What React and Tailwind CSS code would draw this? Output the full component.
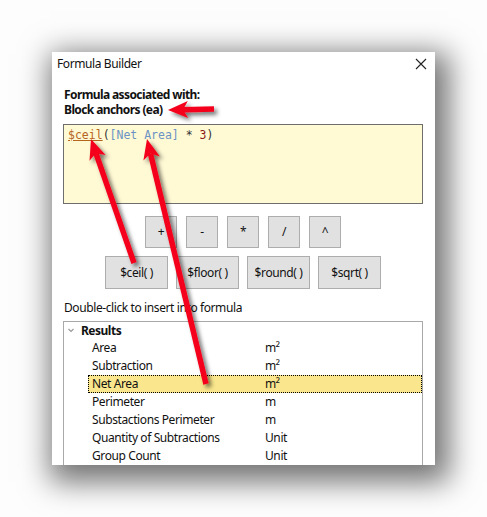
import React from "react";

function arrowParts(tx, ty, sx, sy, headLen = 20, headHalf = 8.5, notch = 15) {
  const dx = tx - sx, dy = ty - sy;
  const len = Math.hypot(dx, dy);
  const ux = dx / len, uy = dy / len;
  const nx = -uy, ny = ux;
  const bx = tx - ux * headLen, by = ty - uy * headLen;
  const mx = tx - ux * notch, my = ty - uy * notch;
  const pts = [
    [tx, ty],
    [bx + nx * headHalf, by + ny * headHalf],
    [mx, my],
    [bx - nx * headHalf, by - ny * headHalf],
  ].map((p) => p.map((v) => v.toFixed(1)).join(",")).join(" ");
  return { pts, line: { x1: sx, y1: sy, x2: mx, y2: my } };
}

function Arrow({ tip, tail }) {
  const a = arrowParts(tip[0], tip[1], tail[0], tail[1]);
  return (
    <g>
      <line {...a.line} stroke="#f4001a" strokeWidth="5.5" strokeLinecap="butt" />
      <polygon points={a.pts} fill="#f4001a" />
    </g>
  );
}

const items = [
  ["Area", "m²"],
  ["Subtraction", "m²"],
  ["Net Area", "m²", true],
  ["Perimeter", "m"],
  ["Substactions Perimeter", "m"],
  ["Quantity of Subtractions", "Unit"],
  ["Group Count", "Unit"],
];

export default function App() {
  return (
    <div
      className="relative w-[487px] h-[517px] bg-[#fdfdfd] overflow-hidden pl-[52px] pt-[52px] text-[12px] tracking-[-0.4px] text-[#111]"
      style={{ fontFamily: '"Noto Sans", "Open Sans", sans-serif' }}
    >
      <div className="w-[383px] h-[413px] bg-white overflow-hidden shadow-[6px_9px_28px_8px_rgba(0,0,0,0.55)]">
        {/* title bar */}
        <div className="h-[23px] flex items-center justify-between pl-[5px] pr-[8px]">
          <span className="text-[12px] text-[#111]">Formula Builder</span>
          <svg width="12" height="12" viewBox="0 0 12 12">
            <path d="M1 1 L11 11 M11 1 L1 11" stroke="#222" strokeWidth="1.1" />
          </svg>
        </div>

        <div className="mt-[12px] pl-[12px] font-bold tracking-[-0.6px] leading-[15px]">
          <div>Formula associated with:</div>
          <div>Block anchors (ea)</div>
        </div>

        <div className="ml-[11px] mt-[7px] w-[360px] h-[80px] border border-[#6e6e6e] bg-[#fff9d4] px-[4px] pt-[2px]">
          <div
            className="text-[11.5px] leading-[16px] tracking-normal whitespace-pre"
            style={{ fontFamily: '"DejaVu Sans Mono", "Liberation Mono", monospace' }}
          >
            <span className="text-[#b5651d] underline">$ceil</span>
            <span className="text-[#333]">(</span>
            <span className="text-[#6b93c4]">[Net Area]</span>
            <span className="text-[#333]"> * </span>
            <span className="text-[#8b1a1a]">3</span>
            <span className="text-[#333]">)</span>
          </div>
        </div>

        <div className="ml-[11px] w-[360px] mt-[12px] flex justify-center gap-[9px]">
          {["+", "-", "*", "/", "^"].map((s) => (
            <div
              key={s}
              className="w-[32px] h-[32px] bg-[#e1e1e1] border border-[#adadad] flex items-center justify-center"
            >
              {s}
            </div>
          ))}
        </div>

        <div className="ml-[11px] w-[360px] mt-[8px] flex justify-center gap-[8px]">
          {["$ceil( )", "$floor( )", "$round( )", "$sqrt( )"].map((s) => (
            <div
              key={s}
              className="w-[63px] h-[33px] bg-[#e1e1e1] border border-[#adadad] flex items-center justify-center"
            >
              {s}
            </div>
          ))}
        </div>

        <div className="mt-[11px] pl-[12px] leading-[15px]">Double-click to insert into formula</div>

        <div className="ml-[11px] mt-[6px] w-[360px] h-[200px] border border-[#a9a9a9]">
          <div className="h-[17px] flex items-center">
            <svg width="16" height="10" viewBox="0 0 16 10" className="ml-[1px]">
              <path d="M3.5 3 L6 5.5 L8.5 3" stroke="#999" strokeWidth="1.2" fill="none" />
            </svg>
            <span className="font-bold tracking-[-0.5px]">Results</span>
          </div>
          {items.map(([name, unit, sel]) => (
            <div
              key={name}
              className={
                "ml-[24px] h-[18px] flex items-center " +
                (sel ? "bg-[#fae68c] border border-dotted border-[#000]" : "border border-transparent")
              }
            >
              <span className="w-[176px] pl-[3px]">{name}</span>
              <span>{unit}</span>
            </div>
          ))}
        </div>
      </div>

      <svg className="absolute left-0 top-0 pointer-events-none" width="487" height="517" viewBox="0 0 487 517">
        <defs>
          <filter id="sh" x="-20%" y="-20%" width="140%" height="140%">
            <feDropShadow dx="3" dy="3" stdDeviation="2.2" floodColor="#000" floodOpacity="0.55" />
          </filter>
        </defs>
        <g filter="url(#sh)">
          <Arrow tip={[168, 110]} tail={[214, 109]} />
          <Arrow tip={[91, 139]} tail={[134, 263]} />
          <Arrow tip={[147, 139]} tail={[206, 384]} />
        </g>
      </svg>
    </div>
  );
}
